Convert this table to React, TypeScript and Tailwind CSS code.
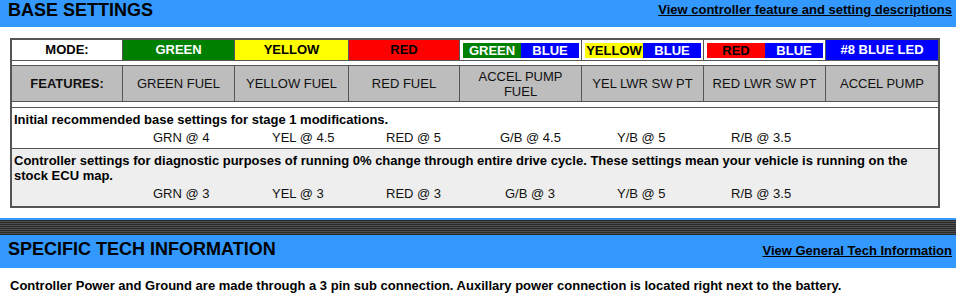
import React from 'react';

type Setting = { label: string; w: number };

const baseSettings: Setting[] = [
  { label: 'GRN @ 4', w: 119 },
  { label: 'YEL @ 4.5', w: 114 },
  { label: 'RED @ 5', w: 114 },
  { label: 'G/B @ 4.5', w: 117 },
  { label: 'Y/B @ 5', w: 114 },
  { label: 'R/B @ 3.5', w: 114 },
];

const stockSettings: Setting[] = [
  { label: 'GRN @ 3', w: 119 },
  { label: 'YEL @ 3', w: 114 },
  { label: 'RED @ 3', w: 119 },
  { label: 'G/B @ 3', w: 112 },
  { label: 'Y/B @ 5', w: 114 },
  { label: 'R/B @ 3.5', w: 114 },
];

const features: React.ReactNode[] = [
  'GREEN FUEL',
  'YELLOW FUEL',
  'RED FUEL',
  <>
    ACCEL PUMP
    <br />
    FUEL
  </>,
  'YEL LWR SW PT',
  'RED LWR SW PT',
  'ACCEL PUMP',
];

const cols = 'grid grid-cols-[111px_112px_114px_111px_122px_122px_122px_1fr]';

const SplitCell: React.FC<{ left: string; leftClass: string }> = ({ left, leftClass }) => (
  <div className="border-r border-[#555] bg-white pl-[3px] pr-[2px] pt-[3px] pb-[2px]">
    <div className="flex h-full font-bold leading-[15px]">
      <div className={`flex-1 flex items-center justify-center ${leftClass}`}>{left}</div>
      <div className="flex-1 flex items-center justify-center bg-[#0000ff] text-white">BLUE</div>
    </div>
  </div>
);

const SettingsLine: React.FC<{ items: Setting[] }> = ({ items }) => (
  <div className="flex pl-[139px] mt-[3px] leading-[15px] text-[#111]">
    {items.map((s) => (
      <span key={s.label} style={{ width: s.w }} className="shrink-0">
        {s.label}
      </span>
    ))}
  </div>
);

export default function App() {
  return (
    <div className="w-[956px] h-[296px] bg-white font-['Liberation_Sans',Arial,sans-serif] text-[13px] text-black overflow-hidden">
      {/* base settings header */}
      <div className="h-[27px] bg-[#3399ff] flex items-start justify-between pl-[8px] pr-[4px]">
        <h1 className="text-[18px] leading-[21px] font-bold">BASE SETTINGS</h1>
        <a href="#" className="mt-[2px] text-[13px] leading-[16px] font-bold underline">
          View controller feature and setting descriptions
        </a>
      </div>

      <div className="ml-[10px] mt-[11px] w-[930px] border-2 border-[#555] bg-white">
        {/* mode colours */}
        <div className={`${cols} h-[21px] border-b border-[#555] font-bold text-center leading-[20px]`}>
          <div className="border-r border-[#555] bg-white">MODE:</div>
          <div className="border-r border-[#555] bg-[#008000] text-white">GREEN</div>
          <div className="border-r border-[#555] bg-[#ffff00]">YELLOW</div>
          <div className="border-r border-[#555] bg-[#ff0000]">RED</div>
          <SplitCell left="GREEN" leftClass="bg-[#008000] text-white" />
          <SplitCell left="YELLOW" leftClass="bg-[#ffff00] text-black" />
          <SplitCell left="RED" leftClass="bg-[#ff0000] text-black" />
          <div className="bg-[#0000ff] text-white">#8 BLUE LED</div>
        </div>

        <div className="h-[4px]" />

        {/* feature per mode */}
        <div className={`${cols} h-[37px] border-y border-[#555] bg-[#bdbdbd] text-center leading-[15px] text-[#111]`}>
          <div className="border-r border-[#555] flex items-center justify-center font-bold">FEATURES:</div>
          {features.map((f, i) => (
            <div
              key={i}
              className={`flex items-center justify-center whitespace-nowrap ${i < features.length - 1 ? 'border-r border-[#555]' : ''}`}
            >
              <span>{f}</span>
            </div>
          ))}
        </div>

        <div className="h-[5px]" />

        <div className="border-t border-b border-[#555] pl-[2px] pt-[4px] pb-[4px] h-[42px]">
          <p className="font-bold leading-[15px]">Initial recommended base settings for stage 1 modifications.</p>
          <SettingsLine items={baseSettings} />
        </div>

        <div className="bg-[#eeeeee] pl-[2px] pr-[4px] pt-[4px] pb-[4px] h-[57px]">
          <p className="font-bold leading-[15px]">
            Controller settings for diagnostic purposes of running 0% change through entire drive cycle. These
            settings mean your vehicle is running on the stock ECU map.
          </p>
          <SettingsLine items={stockSettings} />
        </div>
      </div>

      {/* divider */}
      <div className="mt-[10px] h-[2px] bg-[#3399ff]" />
      <div className="h-[15px] bg-[repeating-linear-gradient(#2a2a2a_0_1px,#4d4d4d_1px_2px)]" />

      {/* tech info header */}
      <div className="h-[33px] bg-[#3399ff] flex items-baseline justify-between pl-[8px] pr-[4px] pt-[4px]">
        <h2 className="text-[18px] leading-[21px] font-bold">SPECIFIC TECH INFORMATION</h2>
        <a href="#" className="text-[13px] leading-[16px] font-bold underline">
          View General Tech Information
        </a>
      </div>

      <p className="pl-[10px] pt-[10px] font-bold leading-[16px]">
        Controller Power and Ground are made through a 3 pin sub connection. Auxillary power connection is located
        right next to the battery.
      </p>
    </div>
  );
}
